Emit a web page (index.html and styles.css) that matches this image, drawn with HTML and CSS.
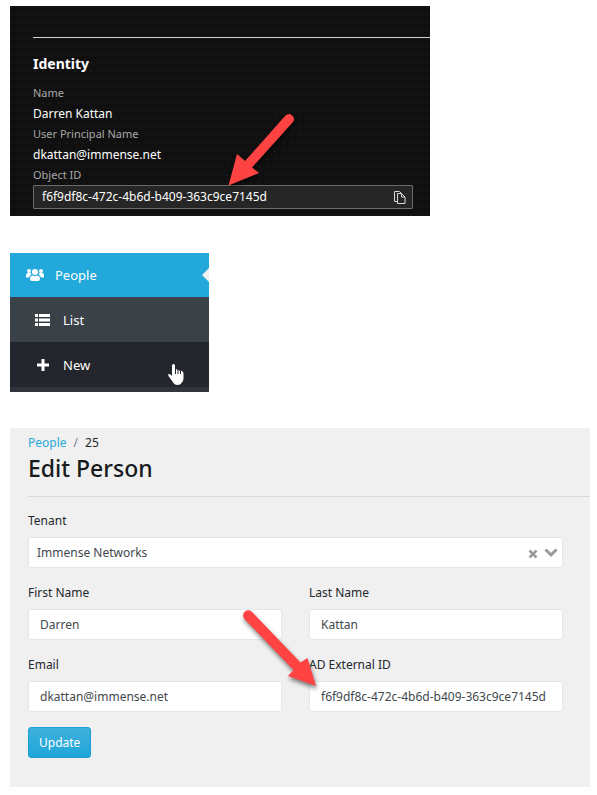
FILE: index.html
```html
<!DOCTYPE html>
<html lang="en">
<head>
<meta charset="utf-8">
<meta name="viewport" content="width=device-width, initial-scale=1">
<title>Edit Person</title>
<link rel="stylesheet" href="styles.css">
</head>
<body>
<main class="page">
  <section class="identity">
    <div class="identity-body">
      <h2 class="identity-title">Identity</h2>
      <dl class="facts">
        <dt>Name</dt>
        <dd>Darren Kattan</dd>
        <dt>User Principal Name</dt>
        <dd>dkattan@immense.net</dd>
      </dl>
      <label class="object-label" for="object-id">Object ID</label>
      <div class="object-box">
        <input class="object-input" id="object-id" type="text" value="f6f9df8c-472c-4b6d-b409-363c9ce7145d" readonly>
        <button class="copy" type="button" aria-label="Copy">
          <svg width="12" height="13" viewBox="0 0 12 13" fill="none" stroke="#d6d6d6"><path d="M3.500 10.500H.5V.5h5l2 2M3.500 2.500h4l3.500 3.500v6.500H3.500zM7.500 2.500v3.500H11"/></svg>
        </button>
        <svg class="arrow arrow-left" width="76" height="80" viewBox="0 0 76 80" aria-hidden="true"><path d="M3.500 75.500L12 44L20 51L60.500 5.500A5 5 0 0 1 68 12L27 57.500L34 63Z"/></svg>
      </div>
    </div>
  </section>

  <nav class="menu" aria-label="Main">
    <a class="menu-item menu-current" href="#">
      <svg class="menu-icon" width="18" height="14" viewBox="0 0 18 14" fill="#fff"><circle cx="3" cy="3" r="2"/><circle cx="15" cy="3" r="2"/><circle cx="9" cy="4" r="3"/><path d="M0 9V7q0-2 2-2h2q1 0 1.500.5Q5 7 3.500 8.500L3 9.500H1Q0 9.500 0 9zM18 9V7q0-2-2-2h-2q-1 0-1.500.5Q13 7 14.500 8.500l.5 1h2q1 0 1-.5zM4 11q0-3.500 3-3.500 2 1 4 0 3 0 3 3.500 0 2-2 2H6q-2 0-2-2z"/></svg>
      <span>People</span>
    </a>
    <a class="menu-item menu-sub" href="#">
      <svg class="menu-icon" width="16" height="14" viewBox="0 0 16 14" fill="#fff"><path d="M0 1h3v3H0zM4 1h11v3H4zM0 5.500h3v3H0zM4 5.500h11v3H4zM0 10h3v3H0zM4 10h11v3H4z"/></svg>
      <span>List</span>
    </a>
    <a class="menu-item menu-sub menu-hover" href="#">
      <svg class="menu-icon" width="16" height="14" viewBox="0 0 16 14"><path d="M8 1v12M2 7h12" stroke="#fff" stroke-width="3"/></svg>
      <span>New</span>
      <svg class="pointer" width="18" height="23" viewBox="0 0 18 23" aria-hidden="true"><path d="M5 12V2.500q0-1.500 1.500-1.500T8 2.500V6q1.500-.5 2.500 1 1.500-.5 2.500 1 1.500-.5 2.500.5 1 .5 1 2v5q0 3-2 4.500-1 2-4 2t-4-2L1.500 13q-1-2 .5-2 1.500 0 3 2z" fill="#fff"/><path d="M8.500 6v5M11 7v4M13.500 8v3" stroke="#24262d"/></svg>
    </a>
  </nav>

  <section class="editor">
    <nav class="crumbs" aria-label="Breadcrumb"><a href="#">People</a><span class="slash">/</span><span>25</span></nav>
    <h1 class="editor-title">Edit Person</h1>
    <form class="form">
      <div class="field field-wide">
        <label for="tenant">Tenant</label>
        <div class="select-box">
          <select class="control select" id="tenant"><option>Immense Networks</option></select>
          <button class="clear" type="button" aria-label="Clear tenant">
            <svg width="10" height="10" viewBox="0 0 10 10"><path d="M1.500 1.500l7 7M8.500 1.500l-7 7" stroke="#999" stroke-width="2.500"/></svg>
          </button>
          <svg class="chevron" width="14" height="10" viewBox="0 0 14 10" fill="none" aria-hidden="true"><path d="M1.500 1.500l5.500 5.500 5.500-5.500" stroke="#999" stroke-width="3"/></svg>
        </div>
      </div>
      <div class="field">
        <label for="first">First Name</label>
        <input class="control" id="first" type="text" value="Darren">
      </div>
      <div class="field">
        <label for="last">Last Name</label>
        <input class="control" id="last" type="text" value="Kattan">
      </div>
      <div class="field">
        <label for="email">Email</label>
        <input class="control" id="email" type="text" value="dkattan@immense.net">
      </div>
      <div class="field">
        <label for="external">AD External ID</label>
        <input class="control" id="external" type="text" value="f6f9df8c-472c-4b6d-b409-363c9ce7145d">
        <svg class="arrow arrow-right" width="84" height="88" viewBox="0 0 84 88" aria-hidden="true"><path d="M76 80L48 70L53.500 64L4.500 13A5 5 0 0 1 12 6L60.500 56.500L67.500 52Z"/></svg>
      </div>
      <button class="update" type="submit">Update</button>
    </form>
  </section>
</main>
</body>
</html>
```
FILE: styles.css
```css
* {
  box-sizing: border-box;
}

body {
  margin: 0;
  background: #fff;
  color: #23282c;
  font-family: "Noto Sans", "Open Sans", sans-serif;
  font-size: 12px;
  line-height: 20px;
}

h1, h2, dl, dd {
  margin: 0;
}

button, input, select {
  margin: 0;
  font: inherit;
  color: inherit;
}

svg {
  display: block;
}

.page {
  display: flex;
  flex-direction: column;
  padding: 6px 7px 8px 10px;
}

/* Identity card */
.identity {
  max-width: 420px;
  padding: 31px 0 7px 23px;
  background-color: #101010;
  background-image: radial-gradient(circle at 1px 1px, #191919 1px, transparent 1px);
  background-size: 8px 8px;
  color: #fff;
}

.identity-body {
  padding: 17px 17px 0 0;
  position: relative;
}

.identity-body::before {
  content: "";
  position: absolute;
  inset: 0 0 auto;
  border-top: 1px solid #d2d2d2;
}

.identity-title {
  margin-bottom: 9px;
  font-size: 14px;
  font-weight: 700;
  line-height: 20px;
}

.facts dt, .object-label {
  display: block;
  color: #a8a8a8;
  font-size: 11px;
  line-height: 20px;
}

.facts dd {
  font-size: 12px;
  line-height: 21px;
}

.object-box {
  position: relative;
  display: flex;
  align-items: center;
  height: 24px;
  border: 1px solid #6c6c6c;
  border-radius: 1px;
  background: #262626;
}

.object-input {
  flex: 1;
  min-width: 0;
  padding: 0 8px;
  border: 0;
  background: none;
  outline: 0;
}

.copy {
  padding: 0 6px;
  border: 0;
  background: none;
}

.arrow {
  position: absolute;
  fill: #ff4343;
  filter: drop-shadow(1px 3px 2px rgba(0, 0, 0, 0.5));
  pointer-events: none;
}

.arrow-left {
  left: 191px;
  bottom: 18px;
}

/* Side menu */
.menu {
  width: 199px;
  margin: 37px 0 36px;
  padding-bottom: 5px;
  background: #2f353a;
}

.menu-item {
  position: relative;
  display: flex;
  align-items: center;
  gap: 11px;
  height: 45px;
  padding: 0 16px;
  color: #fff;
  font-size: 13px;
  text-decoration: none;
}

.menu-current {
  height: 44px;
  background: #22a8db;
}

.menu-current::after {
  content: "";
  position: absolute;
  right: 0;
  border: solid transparent;
  border-width: 7px 7px 7px 0;
  border-right-color: #f0f0f0;
}

.menu-sub {
  gap: 12px;
  padding-left: 25px;
  background: #3a4248;
}

.menu-hover {
  background: #24262d;
}

.pointer {
  position: absolute;
  right: 24px;
  bottom: 1px;
}

/* Person editor */
.editor {
  padding: 5px 0 29px 18px;
  background: #f0f0f0;
}

.crumbs {
  display: flex;
  gap: 7px;
}

.crumbs a {
  color: #29a8da;
  text-decoration: none;
}

.slash {
  color: #73818f;
}

.editor-title {
  padding-bottom: 13px;
  border-bottom: 1px solid #d8d8d8;
  color: #181b1e;
  font-size: 23px;
  font-weight: 500;
  line-height: 30px;
}

.form {
  display: grid;
  grid-template-columns: 1fr 1fr;
  gap: 15px 27px;
  padding: 14px 27px 0 0;
}

.field {
  position: relative;
  display: flex;
  flex-direction: column;
  gap: 6px;
}

.field-wide {
  grid-column: 1 / -1;
}

.control {
  width: 100%;
  height: 31px;
  padding: 0 11px;
  border: 1px solid #e4e7ea;
  border-radius: 3px;
  background: #fff;
  color: #41484e;
}

.select-box {
  position: relative;
}

.select {
  display: block;
  padding: 0 48px 0 8px;
  appearance: none;
}

.clear {
  position: absolute;
  top: 12px;
  right: 25px;
  padding: 0;
  border: 0;
  background: none;
}

.chevron {
  position: absolute;
  top: 11px;
  right: 5px;
  pointer-events: none;
}

.arrow-right {
  left: -69px;
  top: -49px;
}

.update {
  justify-self: start;
  height: 31px;
  padding: 0 10px;
  border: 1px solid #1d9fd2;
  border-radius: 3px;
  background: linear-gradient(#3eb0dd, #1fa6da);
  color: #fff;
}
```
